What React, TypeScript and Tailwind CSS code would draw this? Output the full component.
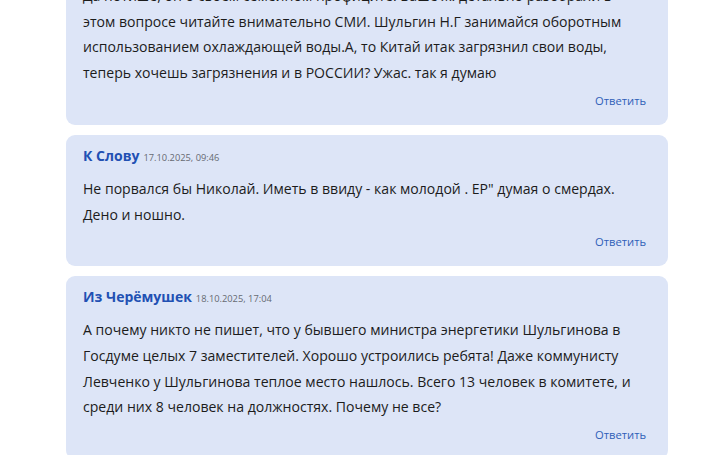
import React from "react";

type C = { name?: string; date?: string; lines: string[]; top?: boolean };

const comments: C[] = [
  {
    name: "Гость",
    date: "17.10.2025, 08:12",
    top: true,
    lines: [
      "Да потише, он о своём семейном профиците. Ваше ж. детально разобрали в",
      "этом вопросе читайте внимательно СМИ. Шульгин Н.Г занимайся оборотным",
      "использованием охлаждающей воды.А, то Китай итак загрязнил свои воды,",
      "теперь хочешь загрязнения и в РОССИИ? Ужас. так я думаю",
    ],
  },
  {
    name: "К Слову",
    date: "17.10.2025, 09:46",
    lines: [
      "Не порвался бы Николай. Иметь в ввиду - как молодой . ЕР\" думая о смердах.",
      "Дено и ношно.",
    ],
  },
  {
    name: "Из Черёмушек",
    date: "18.10.2025, 17:04",
    lines: [
      "А почему никто не пишет, что у бывшего министра энергетики Шульгинова в",
      "Госдуме целых 7 заместителей. Хорошо устроились ребята! Даже коммунисту",
      "Левченко у Шульгинова теплое место нашлось. Всего 13 человек в комитете, и",
      "среди них 8 человек на должностях. Почему не все?",
    ],
  },
];

function Card({ c }: { c: C }) {
  return (
    <div
      className={
        "w-[602px] rounded-[9px] bg-[#dde5f7] pl-[17px] pr-[22px] pt-[11px] pb-[14px] " +
        (c.top ? "mt-[-58px]" : "")
      }
    >
      <div className="flex items-baseline gap-[4px] leading-[20px]">
        <span className="text-[14px] font-bold text-[#2150b3]">{c.name}</span>
        <span className="text-[9.3px] text-[#666a72]">{c.date}</span>
      </div>
      <div className="mt-[8px] text-[14.07px] leading-[25.7px] text-[#1c1c1c]">
        {c.lines.map((l, i) => (
          <div key={i} className="whitespace-nowrap">
            {l}
          </div>
        ))}
      </div>
      <div className="mt-[5px] flex justify-end leading-[20px]">
        <span className="text-[11.2px] text-[#2f5fb8]">Ответить</span>
      </div>
    </div>
  );
}

export default function App() {
  return (
    <div
      className="h-[455px] w-[720px] overflow-hidden bg-white"
      style={{ fontFamily: '"Open Sans", "Noto Sans", sans-serif' }}
    >
      <div className="ml-[66px] flex flex-col gap-[10px]">
        {comments.map((c, i) => (
          <Card key={i} c={c} />
        ))}
      </div>
    </div>
  );
}
